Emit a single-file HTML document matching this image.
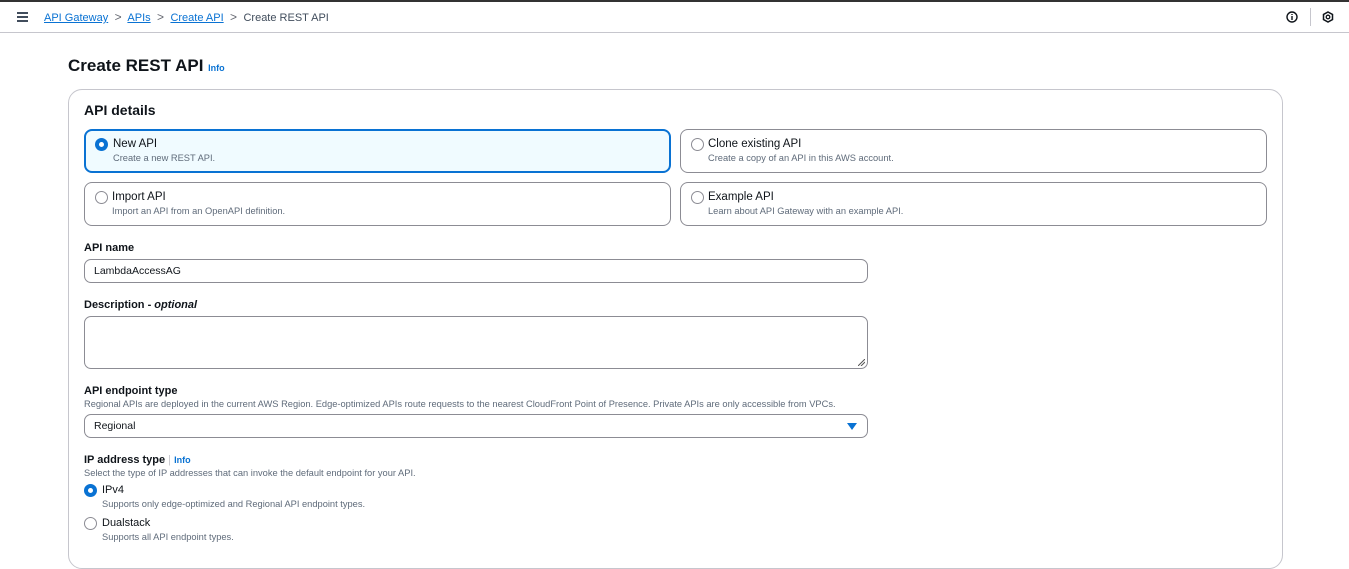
<!DOCTYPE html>
<html><head><style>
*{box-sizing:border-box;margin:0;padding:0}
body{width:1349px;height:549px;overflow:hidden;background:#fff;font-family:"Liberation Sans",Arial,sans-serif;color:#0f141a;position:relative}
.a{position:absolute}
.top{left:0;top:0;width:1349px;height:33px;border-top:2px solid #333;border-bottom:1px solid #c6c6cd;background:#fff}
.bc{font-size:11px;top:10px}
.lnk{color:#0972d3;text-decoration:underline}
.chev{color:#656871;font-size:12px}
.card{left:68px;top:89px;width:1215px;height:480px;border:1px solid #c6c6cd;border-radius:14px;background:#fff}
.tile{border:1px solid #8c8c94;border-radius:8px;height:44px;background:#fff}
.tile.sel{border:2px solid #0972d3;background:#f0fbff}
.t1{font-size:11.5px;position:absolute;left:27px;top:8px}
.t2{font-size:9.3px;color:#5f6b7a;position:absolute;left:27px;top:23px}
.radio{position:absolute;width:13px;height:13px;border-radius:50%;border:1px solid #8c8c94;background:#fff}
.radio.on{border:4px solid #0972d3}
.lbl{font-size:11px;font-weight:bold}
.desc{font-size:9.3px;color:#5f6b7a}
.inp{border:1px solid #8c8c94;border-radius:7px;background:#fff}
.bar{position:absolute;left:17px;width:11px;height:2px;background:#414d5c}
</style></head><body>
<div class="a top"></div>
<div class="bar" style="top:12px"></div><div class="bar" style="top:16px"></div><div class="bar" style="top:20px"></div>
<div class="a bc" style="left:44px"><span class="lnk">API Gateway</span> <span class="chev">&nbsp;&gt;&nbsp;</span> <span class="lnk">APIs</span> <span class="chev">&nbsp;&gt;&nbsp;</span> <span class="lnk">Create API</span> <span class="chev">&nbsp;&gt;&nbsp;</span> <span style="color:#414d5c">Create REST API</span></div>
<svg class="a" style="left:1286px;top:11px" width="12" height="12" viewBox="0 0 12 12"><circle cx="6" cy="6" r="5" fill="none" stroke="#0f141a" stroke-width="1.4"/><path d="M6 5v4M6 3v1" stroke="#0f141a" stroke-width="1.4"/></svg>
<div class="a" style="left:1310px;top:8px;width:1px;height:18px;background:#c6c6cd"></div>
<svg class="a" style="left:1322px;top:11px" width="12" height="12" viewBox="0 0 12 12"><path d="M6 1L10.5 3.5V8.5L6 11L1.5 8.5V3.5Z" fill="none" stroke="#0f141a" stroke-width="1.5"/><circle cx="6" cy="6" r="1.8" fill="none" stroke="#0f141a" stroke-width="1.3"/></svg>
<div class="a" style="left:68px;top:56px;font-size:17px;font-weight:bold">Create REST API <span style="font-size:9px;color:#0972d3">Info</span></div>
<div class="a card"></div>
<div class="a" style="left:84px;top:102px;font-size:14px;font-weight:bold">API details</div>
<div class="a tile sel" style="left:84px;top:129px;width:587px"><div class="radio on" style="left:9px;top:7px"></div><div class="t1" style="top:7px">New API</div><div class="t2" style="top:22px">Create a new REST API.</div></div>
<div class="a tile" style="left:680px;top:129px;width:587px"><div class="radio" style="left:10px;top:8px"></div><div class="t1">Clone existing API</div><div class="t2">Create a copy of an API in this AWS account.</div></div>
<div class="a tile" style="left:84px;top:182px;width:587px"><div class="radio" style="left:10px;top:8px"></div><div class="t1">Import API</div><div class="t2">Import an API from an OpenAPI definition.</div></div>
<div class="a tile" style="left:680px;top:182px;width:587px"><div class="radio" style="left:10px;top:8px"></div><div class="t1">Example API</div><div class="t2">Learn about API Gateway with an example API.</div></div>
<div class="a lbl" style="left:84px;top:242px">API name</div>
<div class="a inp" style="left:84px;top:259px;width:784px;height:24px"><span style="position:absolute;left:9px;top:5px;font-size:10.5px">LambdaAccessAG</span></div>
<div class="a lbl" style="left:84px;top:299px">Description - <i>optional</i></div>
<div class="a inp" style="left:84px;top:316px;width:784px;height:53px"><svg style="position:absolute;right:2px;bottom:2px" width="7" height="7"><path d="M0 7L7 0M3 7L7 3" stroke="#555" stroke-width="1"/></svg></div>
<div class="a lbl" style="left:84px;top:385px">API endpoint type</div>
<div class="a desc" style="left:84px;top:399px">Regional APIs are deployed in the current AWS Region. Edge-optimized APIs route requests to the nearest CloudFront Point of Presence. Private APIs are only accessible from VPCs.</div>
<div class="a inp" style="left:84px;top:414px;width:784px;height:24px"><span style="position:absolute;left:9px;top:5px;font-size:10.5px">Regional</span><svg style="position:absolute;right:10px;top:8px" width="10" height="7"><path d="M0 0H10L5 7Z" fill="#0972d3"/></svg></div>
<div class="a lbl" style="left:84px;top:454px">IP address type <span style="color:#c6c6cd;font-weight:normal">|</span> <span style="color:#0972d3;font-size:9px">Info</span></div>
<div class="a desc" style="left:84px;top:468px">Select the type of IP addresses that can invoke the default endpoint for your API.</div>
<div class="radio on a" style="left:84px;top:484px"></div>
<div class="a" style="left:102px;top:484px;font-size:11px">IPv4</div>
<div class="a desc" style="left:102px;top:499px">Supports only edge-optimized and Regional API endpoint types.</div>
<div class="radio a" style="left:84px;top:517px"></div>
<div class="a" style="left:102px;top:517px;font-size:11px">Dualstack</div>
<div class="a desc" style="left:102px;top:532px">Supports all API endpoint types.</div>
</body></html>
